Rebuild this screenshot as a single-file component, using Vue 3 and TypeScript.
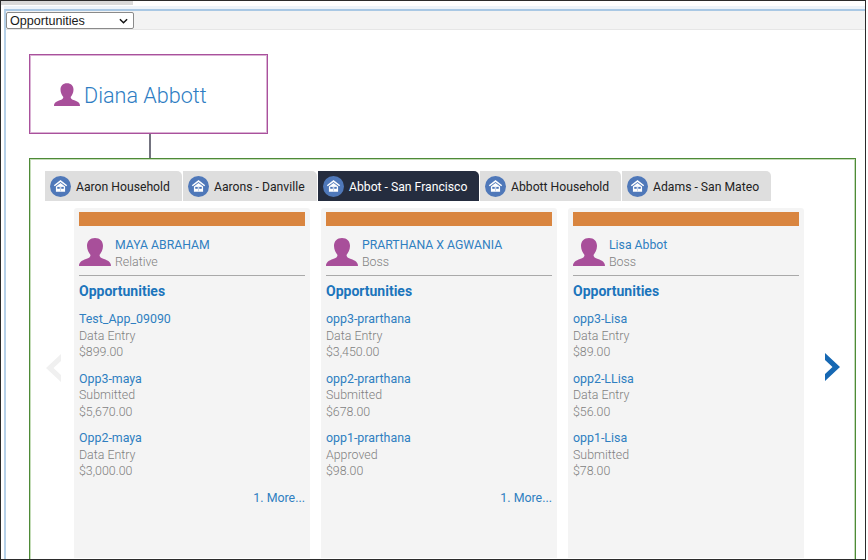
<script setup lang="ts">
interface Opp { name: string; status: string; amount: string }
interface Card { name: string; role: string; opps: Opp[]; more: boolean }

const tabs: { label: string; width: number; active?: boolean }[] = [
  { label: 'Aaron Household', width: 137 },
  { label: 'Aarons - Danville', width: 134 },
  { label: 'Abbot - San Francisco', width: 161, active: true },
  { label: 'Abbott Household', width: 141 },
  { label: 'Adams - San Mateo', width: 149 },
]

const cards: Card[] = [
  {
    name: 'MAYA ABRAHAM', role: 'Relative', more: true,
    opps: [
      { name: 'Test_App_09090', status: 'Data Entry', amount: '$899.00' },
      { name: 'Opp3-maya', status: 'Submitted', amount: '$5,670.00' },
      { name: 'Opp2-maya', status: 'Data Entry', amount: '$3,000.00' },
    ],
  },
  {
    name: 'PRARTHANA X AGWANIA', role: 'Boss', more: true,
    opps: [
      { name: 'opp3-prarthana', status: 'Data Entry', amount: '$3,450.00' },
      { name: 'opp2-prarthana', status: 'Submitted', amount: '$678.00' },
      { name: 'opp1-prarthana', status: 'Approved', amount: '$98.00' },
    ],
  },
  {
    name: 'Lisa Abbot', role: 'Boss', more: false,
    opps: [
      { name: 'opp3-Lisa', status: 'Data Entry', amount: '$89.00' },
      { name: 'opp2-LLisa', status: 'Data Entry', amount: '$56.00' },
      { name: 'opp1-Lisa', status: 'Submitted', amount: '$78.00' },
    ],
  },
]

const personPath =
  'M16 0C11 0 8 3 8 8C8 12 10 15 11.5 17C11.5 19 10 20 7 21C3 22.5 0 24 0 28L32 28C32 24 29 22.5 25 21C22 20 20.5 19 20.5 17C22 15 24 12 24 8C24 3 21 0 16 0Z'
</script>

<template>
  <div class="shot">
    <div class="strip"></div>
    <div class="window">
      <div class="toolbar">
        <div class="picker-wrap">
          <select class="picker">
            <option>Opportunities</option>
          </select>
          <svg class="picker-caret" viewBox="0 0 10 6"><path d="M1 1L5 5L9 1" /></svg>
        </div>
      </div>
      <div class="content">
        <div class="person-box">
          <svg class="person-icon" viewBox="0 0 32 28"><path :d="personPath" /></svg>
          <span class="person-name">Diana Abbott</span>
        </div>
        <div class="connector"></div>
        <div class="group">
          <div class="tabs">
            <div
              v-for="tab in tabs"
              :key="tab.label"
              class="tab"
              :class="{ active: tab.active }"
              :style="{ width: tab.width + 'px' }"
            >
              <svg class="house" viewBox="0 0 22 22">
                <circle cx="11" cy="11" r="11" fill="#4f78b9" />
                <path d="M11 4.2L4 9.6L5 10.8L11 6.2L17 10.8L18 9.6Z" fill="#fff" />
                <path d="M6.2 11L11 7.4L15.8 11V16.6H6.2Z" fill="#fff" />
                <rect x="7.6" y="11.4" width="2.6" height="2" fill="#4f78b9" />
                <rect x="11.8" y="11.4" width="2.6" height="2" fill="#4f78b9" />
                <rect x="10.5" y="11" width="1" height="5.6" fill="#c9d6ea" />
              </svg>
              <span class="tab-label">{{ tab.label }}</span>
            </div>
          </div>
          <div class="carousel">
            <div class="arrow-col">
              <svg class="chevron" viewBox="0 0 15 28"><path d="M15 0L0 14L15 28V21L7.5 14L15 7Z" fill="#f0f0f0" /></svg>
            </div>
            <div class="cards">
              <div v-for="card in cards" :key="card.name" class="card">
                <div class="band"></div>
                <div class="who">
                  <svg class="avatar" viewBox="0 0 32 28"><path :d="personPath" /></svg>
                  <div class="who-text">
                    <div class="who-name">{{ card.name }}</div>
                    <div class="muted">{{ card.role }}</div>
                  </div>
                </div>
                <h3 class="heading">Opportunities</h3>
                <div v-for="opp in card.opps" :key="opp.name" class="opp">
                  <div class="opp-name">{{ opp.name }}</div>
                  <div class="muted">{{ opp.status }}</div>
                  <div class="muted">{{ opp.amount }}</div>
                </div>
                <div v-if="card.more" class="more">1. More...</div>
              </div>
            </div>
            <div class="arrow-col right">
              <svg class="chevron" viewBox="0 0 15 28"><path d="M0 0L15 14L0 28V21L7.5 14L0 7Z" fill="#1668b3" /></svg>
            </div>
          </div>
        </div>
      </div>
    </div>
  </div>
</template>

<style>
html, body { margin: 0; background: #fff; overflow: hidden; }
</style>

<style scoped>
.shot {
  box-sizing: border-box;
  width: 866px;
  height: 560px;
  border: 1px solid #2b2b2b;
  background: #fff;
  overflow: hidden;
  font-family: Roboto, "Liberation Sans", sans-serif;
}
.strip {
  width: 132px;
  height: 4px;
  background: #d9d9d9;
}
.window {
  margin: 4px 0 0 3px;
  border-left: 2px solid #b5d0e8;
  border-top: 2px solid #a9c8e4;
  box-shadow: 0 -3px 0 #eef4fa;
}
.toolbar {
  box-sizing: border-box;
  height: 19px;
  background: #f3f3f3;
  border-bottom: 1px solid #e6e6e6;
  padding-top: 1px;
  display: flex;
  align-items: flex-start;
}
.picker-wrap {
  position: relative;
  width: 128px;
  height: 17px;
}
.picker {
  display: block;
  appearance: none;
  width: 100%;
  height: 100%;
  box-sizing: border-box;
  font-family: "Liberation Sans", Arial, sans-serif;
  font-size: 12.6px;
  color: #1a1a1a;
  background: #fff;
  border: 1px solid #8a8a8a;
  border-radius: 2px;
  padding: 0 0 0 3px;
  outline: none;
}
.picker-caret {
  position: absolute;
  right: 6px;
  top: 6px;
  width: 9px;
  height: 6px;
  fill: none;
  stroke: #111;
  stroke-width: 1.6;
  pointer-events: none;
}
.content {
  padding: 24px 0 0 23px;
}
.person-box {
  box-sizing: border-box;
  width: 239px;
  height: 80px;
  border: 1px solid #a9519c;
  box-shadow: inset 0 0 0 1px rgba(173, 85, 160, 0.45);
  display: flex;
  align-items: center;
  padding-left: 24px;
  gap: 4px;
}
.person-icon {
  width: 26px;
  height: 23px;
  fill: #a84f9a;
  margin-top: 1px;
}
.person-name {
  font-size: 21.6px;
  font-weight: 300;
  color: #2e7dc3;
  margin-top: 2px;
}
.connector {
  width: 2px;
  height: 24px;
  margin-left: 120px;
  background: #73737f;
}
.group {
  box-sizing: border-box;
  width: 827px;
  height: 420px;
  border: 1px solid #4e8a37;
  outline: 1px solid #c4dcb8;
  outline-offset: -2px;
  padding: 12px 0 0 15px;
}
.tabs {
  display: flex;
  gap: 1px;
  height: 30px;
}
.tab {
  box-sizing: border-box;
  display: flex;
  align-items: center;
  gap: 5px;
  padding-left: 5px;
  background: #dedede;
  border-radius: 0 5px 0 0;
  font-size: 12.2px;
  color: #222;
  white-space: nowrap;
}
.tab-label {
  margin-top: 1px;
}
.tab.active {
  background: #252d3f;
  color: #fff;
}
.house {
  width: 21px;
  height: 21px;
  flex: none;
}
.carousel {
  display: flex;
  margin: 7px 0 0 -15px;
}
.arrow-col {
  width: 44px;
  flex: none;
  padding: 146px 0 0 16px;
  box-sizing: border-box;
}
.arrow-col.right {
  padding: 145px 0 0 21px;
}
.chevron {
  display: block;
  width: 15px;
  height: 28px;
}
.cards {
  display: flex;
  gap: 11px;
}
.card {
  box-sizing: border-box;
  width: 236px;
  height: 350px;
  background: #f4f4f4;
  border-radius: 3px 3px 0 0;
  padding: 4px 5px 0;
}
.band {
  height: 14px;
  background: #d9853f;
}
.who {
  display: flex;
  gap: 4px;
  align-items: flex-end;
  height: 50px;
  box-sizing: border-box;
  padding-bottom: 9px;
  border-bottom: 1px solid #a9a9a9;
}
.who-text {
  margin-bottom: -4px;
}
.avatar {
  width: 32px;
  height: 28px;
  fill: #a84f9a;
  flex: none;
}
.who-name {
  font-size: 12.25px;
  line-height: 17px;
  color: #2f7fc1;
  white-space: nowrap;
}
.muted {
  font-size: 12.4px;
  line-height: 16.5px;
  font-weight: 300;
  color: #7f7f7f;
}
.heading {
  margin: 7px 0 12px;
  font-size: 14px;
  line-height: 16px;
  font-weight: 700;
  color: #1b75bc;
}
.opp {
  margin-bottom: 10px;
}
.opp-name {
  font-size: 12.4px;
  line-height: 16.5px;
  color: #2f7fc1;
}
.more {
  margin-top: 8px;
  text-align: right;
  font-size: 12.4px;
  line-height: 16px;
  color: #2f7fc1;
}
</style>
